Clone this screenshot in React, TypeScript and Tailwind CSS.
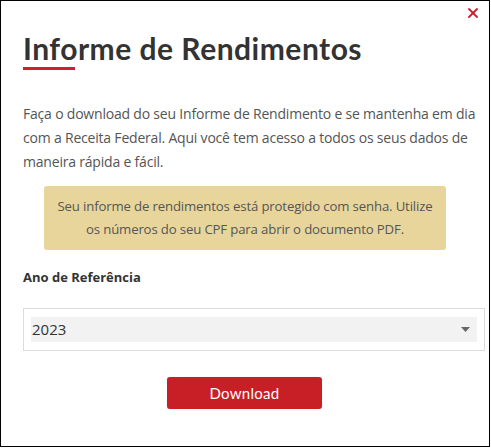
import { X } from 'lucide-react'

// Modal: informe de rendimentos (download do PDF por ano).
export default function App() {
  const body = "font-['Open_Sans',sans-serif]"

  return (
    <div className="w-[491px] h-[448px] bg-white">
      <div className="relative w-[490px] h-[447px] border border-black bg-white pl-[22px] pr-[5px]">
        <button className="absolute right-[8px] top-[4px] text-[#c8202a]">
          <X className="w-[16px] h-[16px]" strokeWidth={2.75} />
        </button>

        <h1 className="pt-[29px] text-[30px] leading-[36px] font-bold tracking-[0.5px] text-[#333] font-['Lato',sans-serif]">
          Informe de Rendimentos
        </h1>
        <div className="mt-[1px] w-[52px] h-[3px] bg-[#d0202a]" />

        <p className={`mt-[32px] text-[14px] leading-[24px] text-[#555] tracking-[-0.2px] ${body}`}>
          Faça o download do seu Informe de Rendimento e se mantenha em dia com a Receita Federal. Aqui você tem acesso a todos os seus dados de maneira rápida e fácil.
        </p>

        <div className={`mt-[12px] ml-[21px] w-[402px] h-[64px] rounded-[3px] bg-[#e8d59c] flex items-center justify-center text-center text-[13.2px] leading-[23px] text-[#555] tracking-[-0.15px] ${body}`}>
          <p className="px-[8px]">
            Seu informe de rendimentos está protegido com senha. Utilize os números do seu CPF para abrir o documento PDF.
          </p>
        </div>

        <label className={`block mt-[18px] text-[13px] leading-[18px] font-bold text-[#333] ${body}`}>
          Ano de Referência
        </label>

        <div className="mt-[22px] w-[462px] h-[43px] border border-[#dcdcdc] px-[7px] py-[8px]">
          <div className={`h-[25px] bg-[#f2f2f2] flex items-center justify-between pl-[1px] pr-[7px] text-[15px] text-[#333] ${body}`}>
            <span>2023</span>
            <svg width="9" height="5" viewBox="0 0 9 5">
              <path d="M0 0h9L4.5 5z" fill="#666" />
            </svg>
          </div>
        </div>

        <div className="mt-[26px] flex pl-[144px]">
          <button className="w-[155px] h-[32px] rounded-[3px] bg-[#c81e26] text-white text-[15px] font-['Lato',sans-serif] tracking-[0.3px] shadow-[0_0_1px_rgba(0,0,0,0.2)]">
            Download
          </button>
        </div>
      </div>
    </div>
  )
}
